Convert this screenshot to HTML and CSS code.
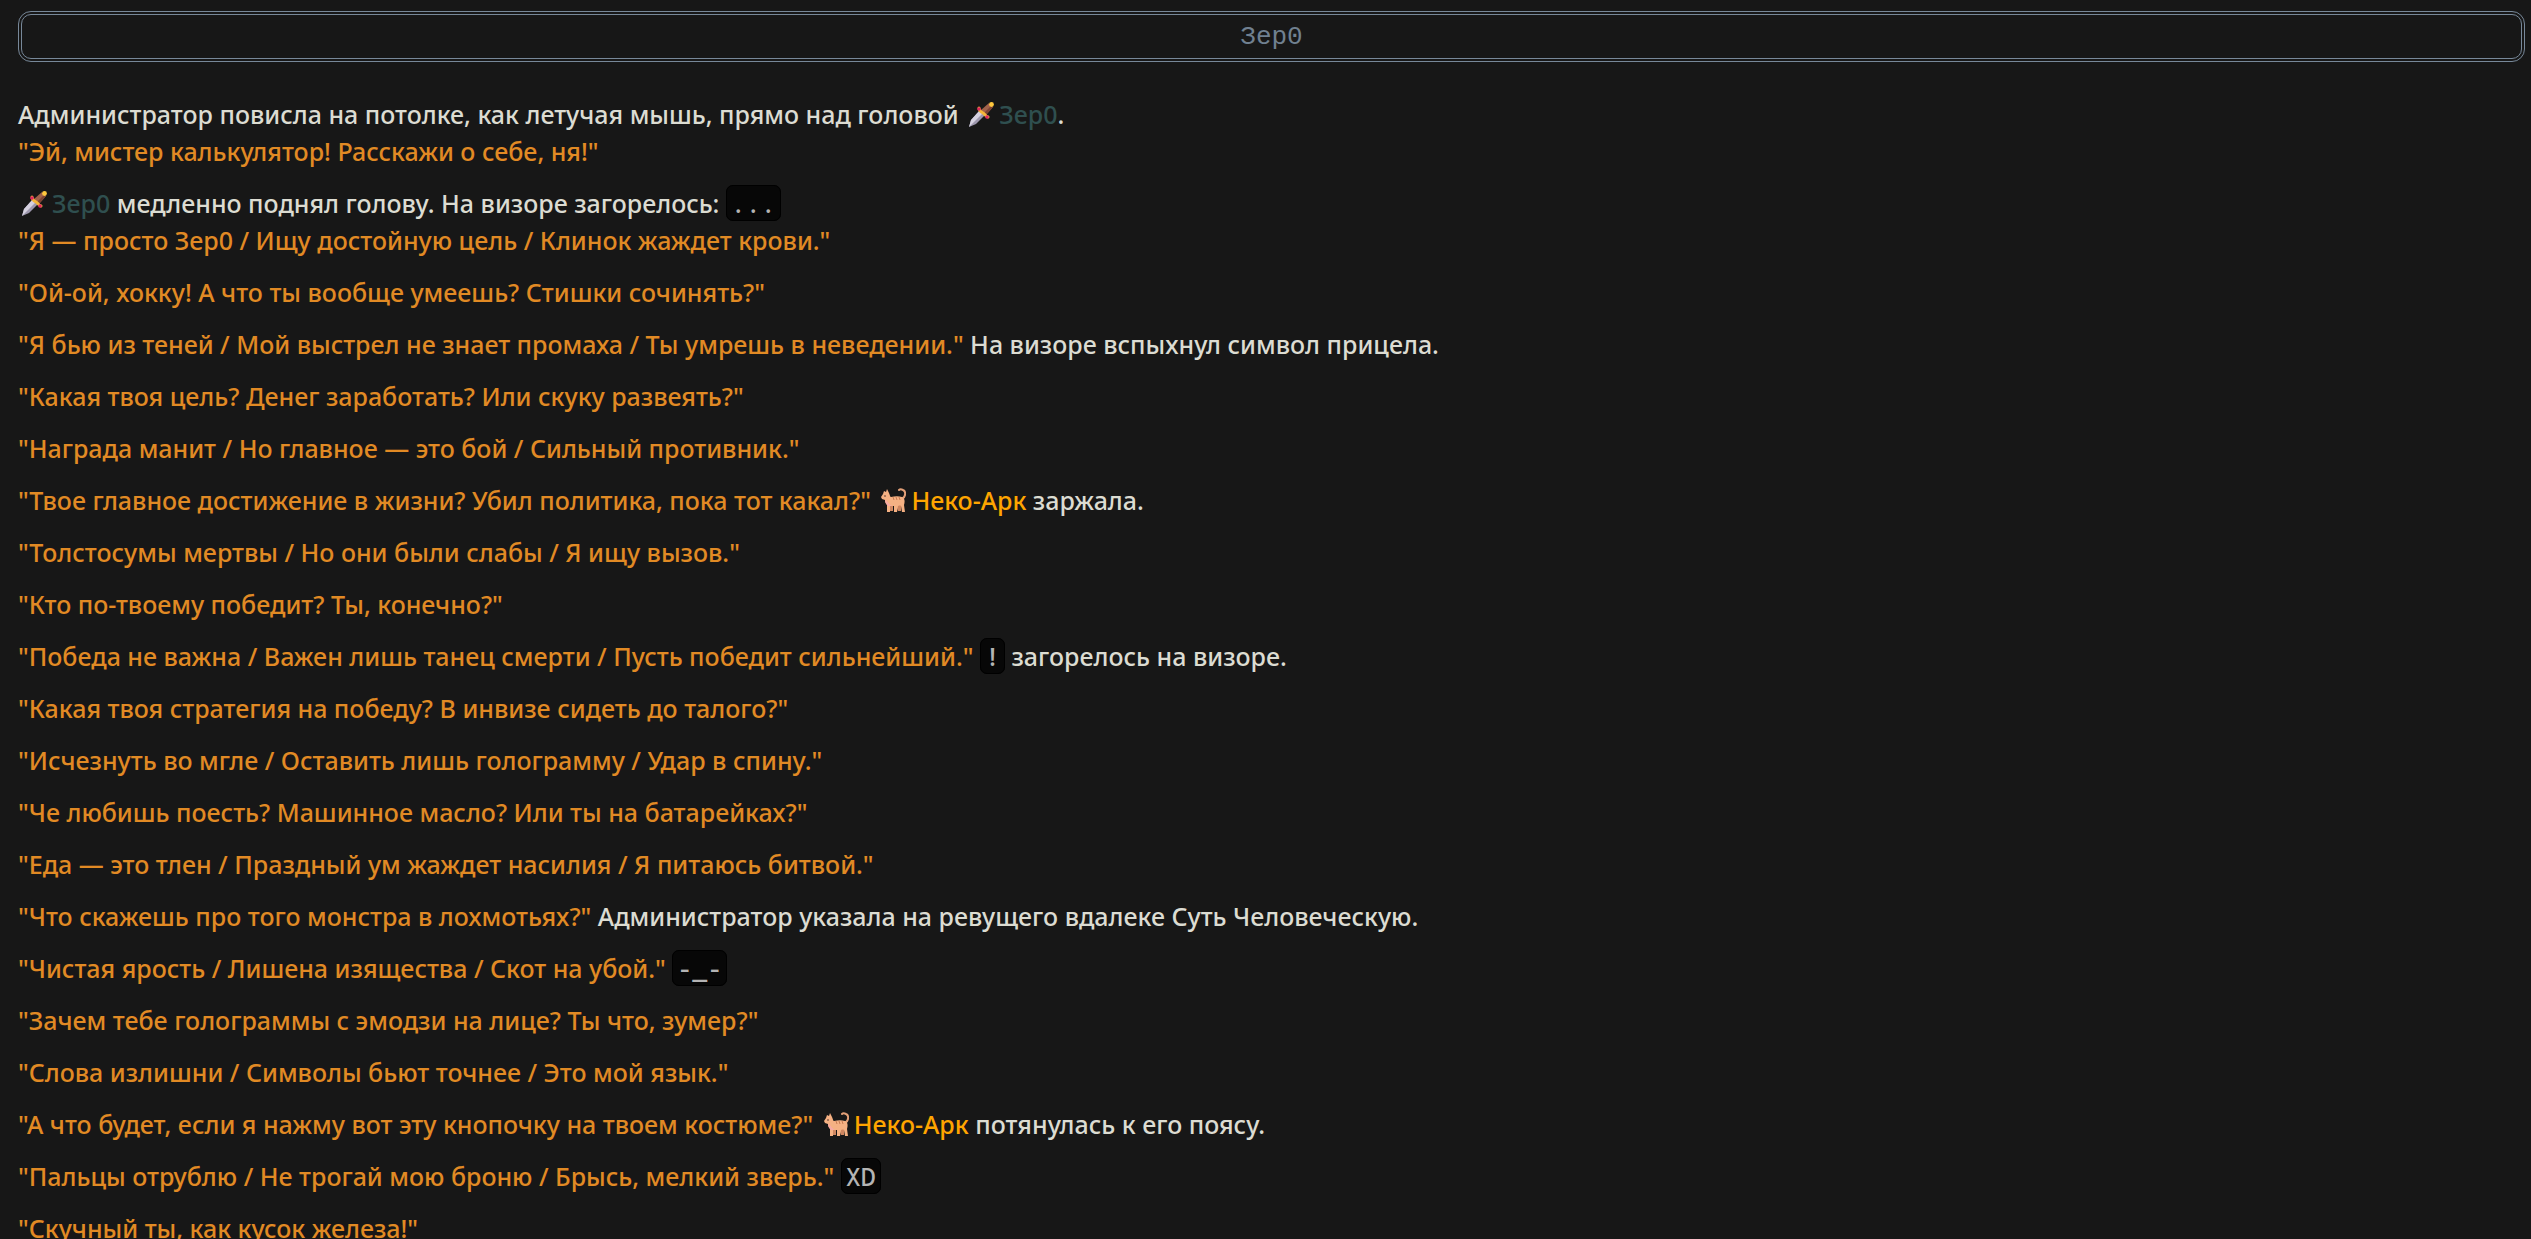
FILE: index.html
```html
<!DOCTYPE html>
<html lang="ru">
<head>
    <meta charset="UTF-8">
    <meta name="viewport" content="width=device-width, initial-scale=1.0">
    <title>Зер0</title>
    <link rel="stylesheet" href="styles.css">
</head>
<body>

<!-- Shared icons -->
<svg class="sprite" aria-hidden="true">
    <symbol id="dagger" viewBox="0 0 25 25">
        <path d="M0 25 L2 18 L11 8 L16 13 L7 22 Z" fill="#9d97ad"/>
        <path d="M0 25 L2 18 L11 8 L14 11 Z" fill="#d5d1e0"/>
        <path d="M12 8 L20 1 L24 5 L17 13 Z" fill="#a0614a"/>
        <path d="M15 11 L17 13 L24 5 L22 4 Z" fill="#7d4434"/>
        <path d="M10 6 C10 9 12 10 14 11 C16 12 16 14 19 15" stroke="#f5b73a" stroke-width="3" stroke-linecap="round" fill="none"/>
        <circle cx="22.500" cy="2.500" r="2.400" fill="#ffc83d"/>
        <circle cx="10" cy="7" r="1.800" fill="#e0245e"/>
        <circle cx="18" cy="15" r="1.800" fill="#e0245e"/>
    </symbol>
    <symbol id="cat" viewBox="0 0 25 25">
        <path d="M21 11 C25 9 25 3 22 2 C20 1 19 1 18 2" stroke="#e3a078" stroke-width="2" fill="none" stroke-linecap="round"/>
        <path d="M15 16 L17 23 L20 23 L20 16 Z M8 16 L9 23 L12 23 L12 16 Z" fill="#cf8660"/>
        <path d="M2 6 L3 3 L5 4 L6 1 L8 5 C9 7 9 9 10 9 C14 8 18 8 21 9 C24 10 24 14 23 17 L24 24 L21 24 L20 18 C19 17 17 18 17 18 L16 24 L13 24 L13 18 L9 18 L9 24 L6 24 L6 17 C4 15 4 13 4 12 L1 11 L0 9 Z" fill="#f5b183"/>
        <path d="M4 12 C7 13 7 16 11 18 L7 18 C5 16 4 14 4 12 Z" fill="#f6a9a4"/>
        <path d="M12 9 L13 12 M15 9 L16 12 M18 9 L19 12" stroke="#c77b52" stroke-width="1"/>
        <circle cx="4" cy="8" r="0.800" fill="#4a2f27"/>
    </symbol>
</svg>

<main class="message">
    <h1 class="name-plate">Зер0</h1>

    <p>Администратор повисла на потолке, как летучая мышь, прямо над головой <span class="zero"><svg class="icon"><use href="#dagger"/></svg>Зер0</span>.<br>
    <q>"Эй, мистер калькулятор! Расскажи о себе, ня!"</q></p>

    <p><span class="zero"><svg class="icon"><use href="#dagger"/></svg>Зер0</span> медленно поднял голову. На визоре загорелось: <code>...</code><br>
    <q>"Я — просто Зер0 / Ищу достойную цель / Клинок жаждет крови."</q></p>

    <p><q>"Ой-ой, хокку! А что ты вообще умеешь? Стишки сочинять?"</q></p>

    <p><q>"Я бью из теней / Мой выстрел не знает промаха / Ты умрешь в неведении."</q> На визоре вспыхнул символ прицела.</p>

    <p><q>"Какая твоя цель? Денег заработать? Или скуку развеять?"</q></p>

    <p><q>"Награда манит / Но главное — это бой / Сильный противник."</q></p>

    <p><q>"Твое главное достижение в жизни? Убил политика, пока тот какал?"</q> <span class="neko"><svg class="icon"><use href="#cat"/></svg>Неко-Арк</span> заржала.</p>

    <p><q>"Толстосумы мертвы / Но они были слабы / Я ищу вызов."</q></p>

    <p><q>"Кто по-твоему победит? Ты, конечно?"</q></p>

    <p><q>"Победа не важна / Важен лишь танец смерти / Пусть победит сильнейший."</q> <code>!</code> загорелось на визоре.</p>

    <p><q>"Какая твоя стратегия на победу? В инвизе сидеть до талого?"</q></p>

    <p><q>"Исчезнуть во мгле / Оставить лишь голограмму / Удар в спину."</q></p>

    <p><q>"Че любишь поесть? Машинное масло? Или ты на батарейках?"</q></p>

    <p><q>"Еда — это тлен / Праздный ум жаждет насилия / Я питаюсь битвой."</q></p>

    <p><q>"Что скажешь про того монстра в лохмотьях?"</q> Администратор указала на ревущего вдалеке Суть Человеческую.</p>

    <p><q>"Чистая ярость / Лишена изящества / Скот на убой."</q> <code>-_-</code></p>

    <p><q>"Зачем тебе голограммы с эмодзи на лице? Ты что, зумер?"</q></p>

    <p><q>"Слова излишни / Символы бьют точнее / Это мой язык."</q></p>

    <p><q>"А что будет, если я нажму вот эту кнопочку на твоем костюме?"</q> <span class="neko"><svg class="icon"><use href="#cat"/></svg>Неко-Арк</span> потянулась к его поясу.</p>

    <p><q>"Пальцы отрублю / Не трогай мою броню / Брысь, мелкий зверь."</q> <code>XD</code></p>

    <p><q>"Скучный ты, как кусок железа!"</q></p>
</main>

</body>
</html>
```
FILE: styles.css
```css
body {
    margin: 0;
    height: 100vh;
    overflow: hidden;
    background-color: #171717;
    color: #dcdcd2;
    font-family: "Noto Sans", sans-serif;
    font-size: 25px;
    font-weight: 500;
    line-height: 37px;
}
.sprite {
    display: none;
}
.message {
    padding: 11px 6px 0 18px;
}
.name-plate {
    margin: 0 0 34px;
    padding: 4px 3px 2px;
    border: 4px double #778899;
    border-radius: 13px;
    color: #708090;
    font-family: "Liberation Mono", monospace;
    font-size: 26px;
    font-weight: 400;
    text-align: center;
}
p {
    margin: 0 0 15px;
}
q {
    color: #e18a24;
    quotes: none;
}
code {
    padding: 0 4px;
    border: 1px solid #000000;
    border-radius: 7px;
    background-color: #070707;
    color: #b4b4b4;
    font-family: "Noto Sans Mono", "DejaVu Sans Mono", monospace;
    font-size: 25px;
}
.zero {
    color: #2f4f4f;
}
.neko {
    color: #ffa500;
}
.icon {
    width: 25px;
    height: 25px;
    margin: 0 5px 0 4px;
    vertical-align: -3px;
}
```
